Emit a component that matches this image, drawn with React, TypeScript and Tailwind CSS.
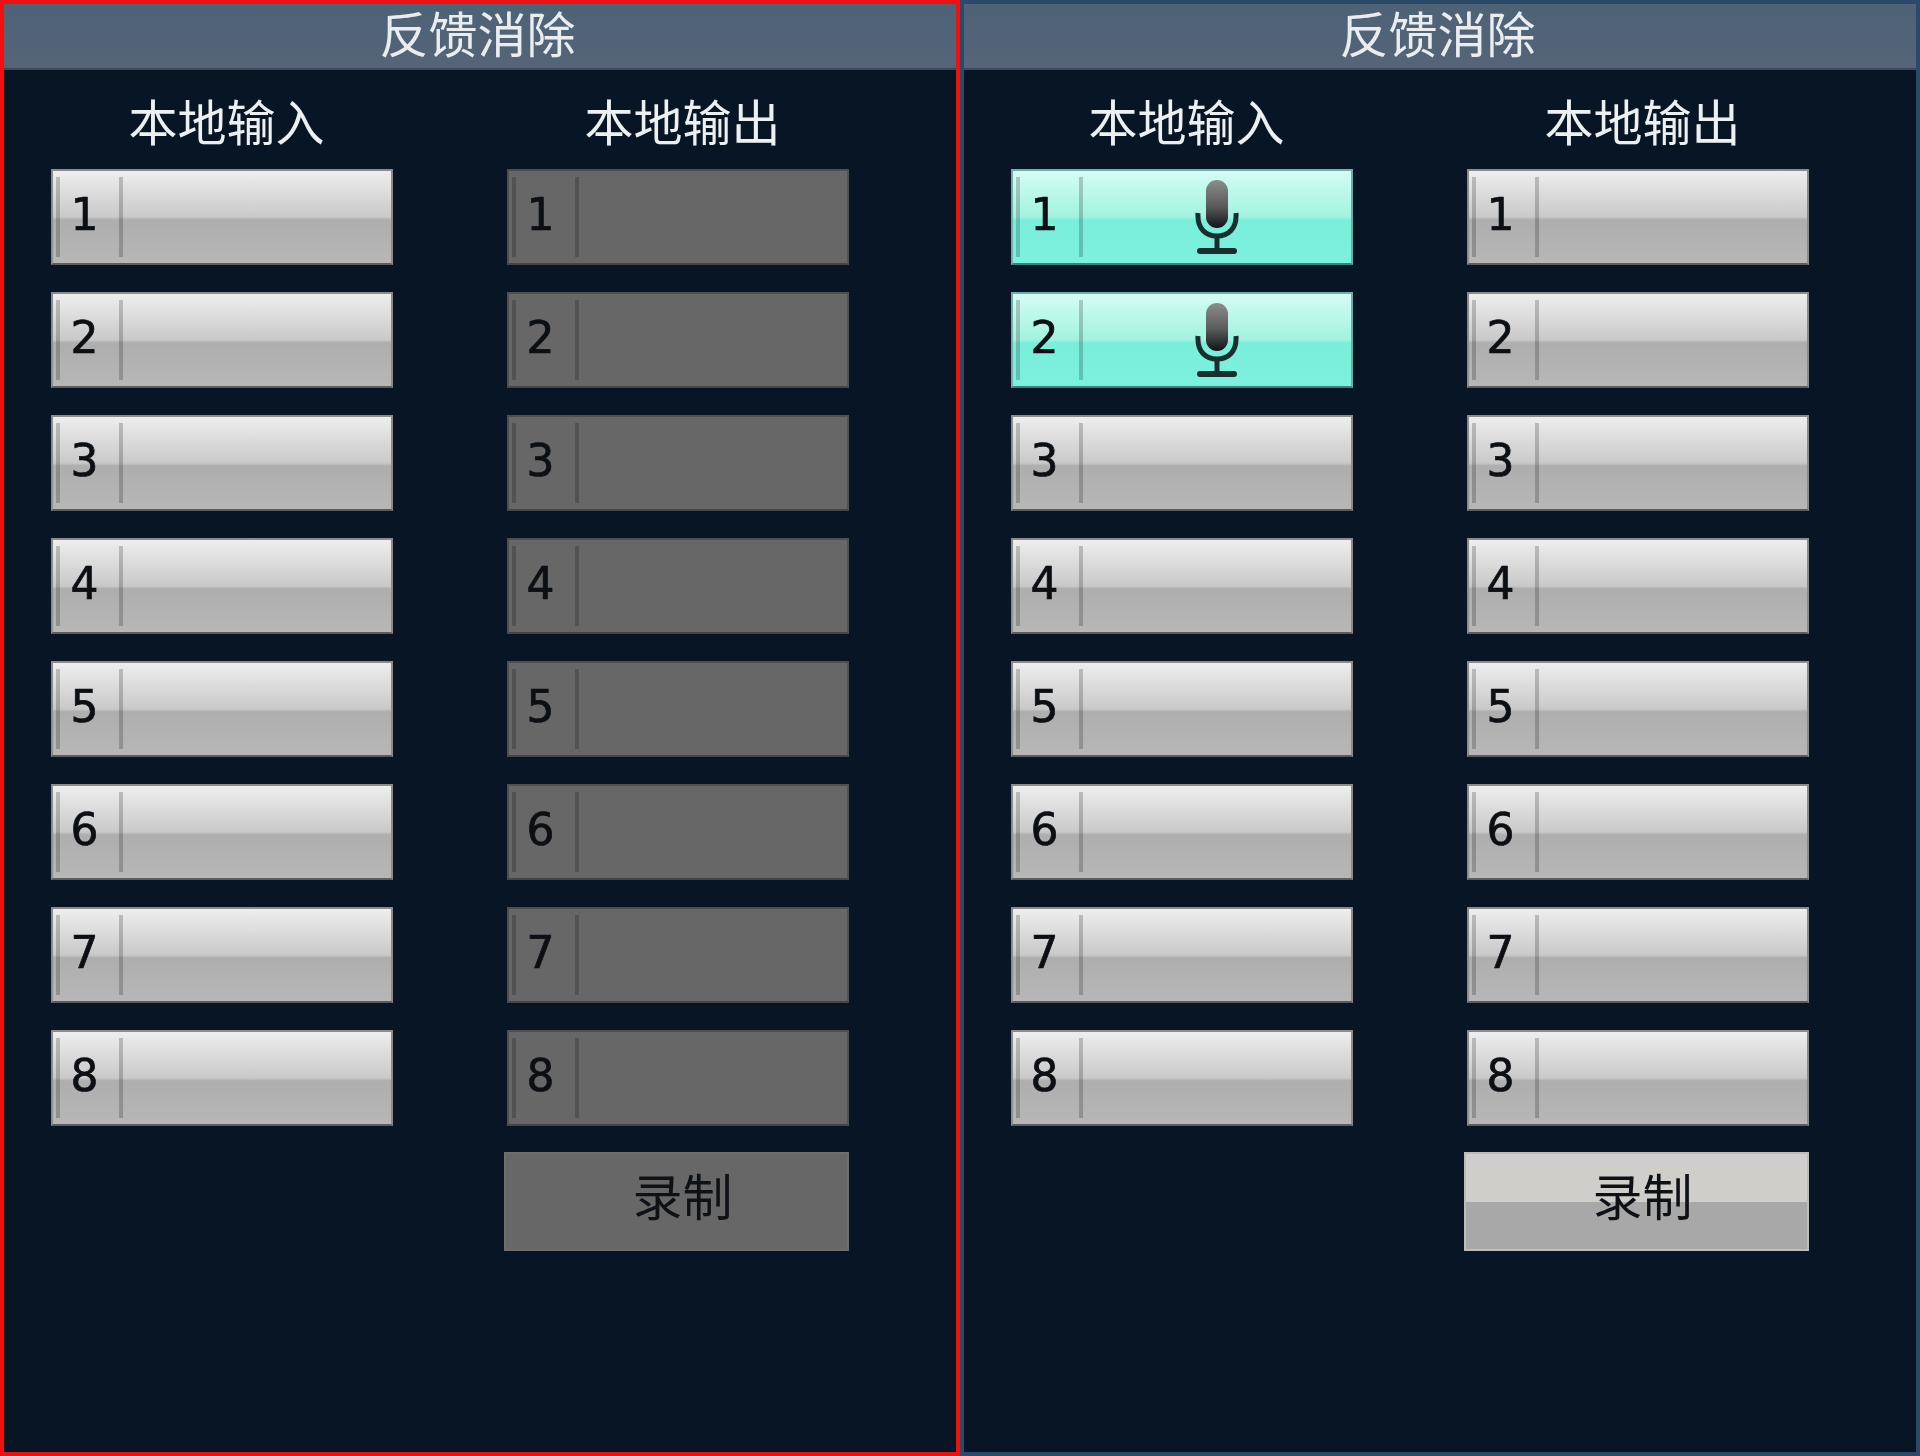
import { useId } from "react";

type Status = "normal" | "active" | "disabled";

const CJK = "font-['Noto_Sans_CJK_SC','Noto_Sans',sans-serif]";

const statusStyles: Record<Status, string> = {
  normal:
    "bg-[linear-gradient(180deg,#eeeeee_0%,#c9c9c9_50%,#aeaeae_53%,#b7b7b7_100%)] border-t-[#8c8c8c] border-l-[#8c8c8c] border-r-[#8a8a8a] border-b-[#5c5c5c]",
  active:
    "bg-[linear-gradient(180deg,#d4fdf4_0%,#a2f2e0_50%,#79efda_53%,#7cf2de_100%)] border-t-[#6fb0a8] border-l-[#6fb0a8] border-r-[#6fa8a4] border-b-[#3f7f7c]",
  disabled:
    "bg-[#676767] border-t-[#4f4f4f] border-l-[#4f4f4f] border-r-[#525252] border-b-[#454545]",
};

function MicIcon() {
  const id = useId();
  return (
    <svg width="44" height="76" viewBox="0 0 44 76" fill="none">
      <defs>
        <linearGradient id={id} x1="0" y1="0" x2="0" y2="1">
          <stop offset="0" stopColor="#8c8c8c" />
          <stop offset="0.55" stopColor="#5a5a5a" />
          <stop offset="1" stopColor="#0d1418" />
        </linearGradient>
      </defs>
      <path d="M3 34 C2 50 11 57 22 57 C33 57 42 50 41 34" stroke="#17302f" strokeWidth="5" />
      <rect x="11" y="1" width="22" height="48" rx="11" fill={`url(#${id})`} />
      <path d="M22 57 V70" stroke="#17302f" strokeWidth="5" />
      <path d="M5 72 H39" stroke="#17302f" strokeWidth="6" strokeLinecap="round" />
    </svg>
  );
}

function ChannelButton({ num, status, mic }: { num: number; status: Status; mic?: boolean }) {
  return (
    <div className={`flex h-[96px] w-[342px] border-2 pl-[3px] ${statusStyles[status]}`}>
      <div className="my-[6px] flex w-[67px] items-center justify-center border-x-[4px] border-black/20 pb-[4px] pr-[10px] font-['DejaVu_Sans',sans-serif] text-[44px] leading-none text-[#0c0f14] [-webkit-text-stroke:0.7px_#0c0f14]">
        {num}
      </div>
      <div className="flex flex-1 items-center justify-center">{mic && <MicIcon />}</div>
    </div>
  );
}

function RecordButton({ enabled }: { enabled: boolean }) {
  const cls = enabled
    ? "bg-[linear-gradient(180deg,#cfcec9_0%,#cfcec9_50%,#a8a8a8_51%,#a8a8a8_100%)] border-[#bcbcba]"
    : "bg-[#676767] border-[#6e6e6e]";
  return (
    <div
      className={`-ml-[3px] mt-[26px] flex h-[99px] w-[345px] items-center justify-center border-2 pb-[15px] pl-[12px] text-[50px] leading-none text-[#0e1116] ${CJK} ${cls}`}
    >
      录制
    </div>
  );
}

function Panel({
  borderCls,
  enabled,
  activeInputs,
}: {
  borderCls: string;
  enabled: boolean;
  activeInputs: number[];
}) {
  const nums = [1, 2, 3, 4, 5, 6, 7, 8];
  return (
    <div className={`flex h-[1456px] w-[960px] flex-col border-[4px] bg-[#071524] ${borderCls}`}>
      <div
        className={`flex h-[66px] items-center justify-center border-b-2 border-[#3c4a5c] bg-[linear-gradient(180deg,#4d6276_0%,#566478_100%)] pb-[9px] pr-[5px] text-[49px] leading-none text-[#e9edf0] ${CJK}`}
      >
        反馈消除
      </div>
      <div className="flex gap-[114px] pl-[47px]">
        <div className="flex w-[342px] flex-col">
          <div
            className={`flex h-[99px] items-center justify-center pl-[9px] text-[49px] leading-none text-[#edf0f2] ${CJK}`}
          >
            本地输入
          </div>
          <div className="flex flex-col gap-[27px]">
            {nums.map((n) => (
              <ChannelButton
                key={n}
                num={n}
                status={activeInputs.includes(n) ? "active" : "normal"}
                mic={activeInputs.includes(n)}
              />
            ))}
          </div>
        </div>
        <div className="flex w-[342px] flex-col">
          <div
            className={`flex h-[99px] items-center justify-center pl-[9px] text-[49px] leading-none text-[#edf0f2] ${CJK}`}
          >
            本地输出
          </div>
          <div className="flex flex-col gap-[27px]">
            {nums.map((n) => (
              <ChannelButton key={n} num={n} status={enabled ? "normal" : "disabled"} />
            ))}
          </div>
          <RecordButton enabled={enabled} />
        </div>
      </div>
    </div>
  );
}

export default function App() {
  return (
    <div className="flex h-[1456px] w-[1920px] overflow-hidden bg-[#071524] blur-[0.7px]">
      <Panel borderCls="border-[#f01010]" enabled={false} activeInputs={[]} />
      <Panel borderCls="border-[#2a4a68]" enabled={true} activeInputs={[1, 2]} />
    </div>
  );
}
